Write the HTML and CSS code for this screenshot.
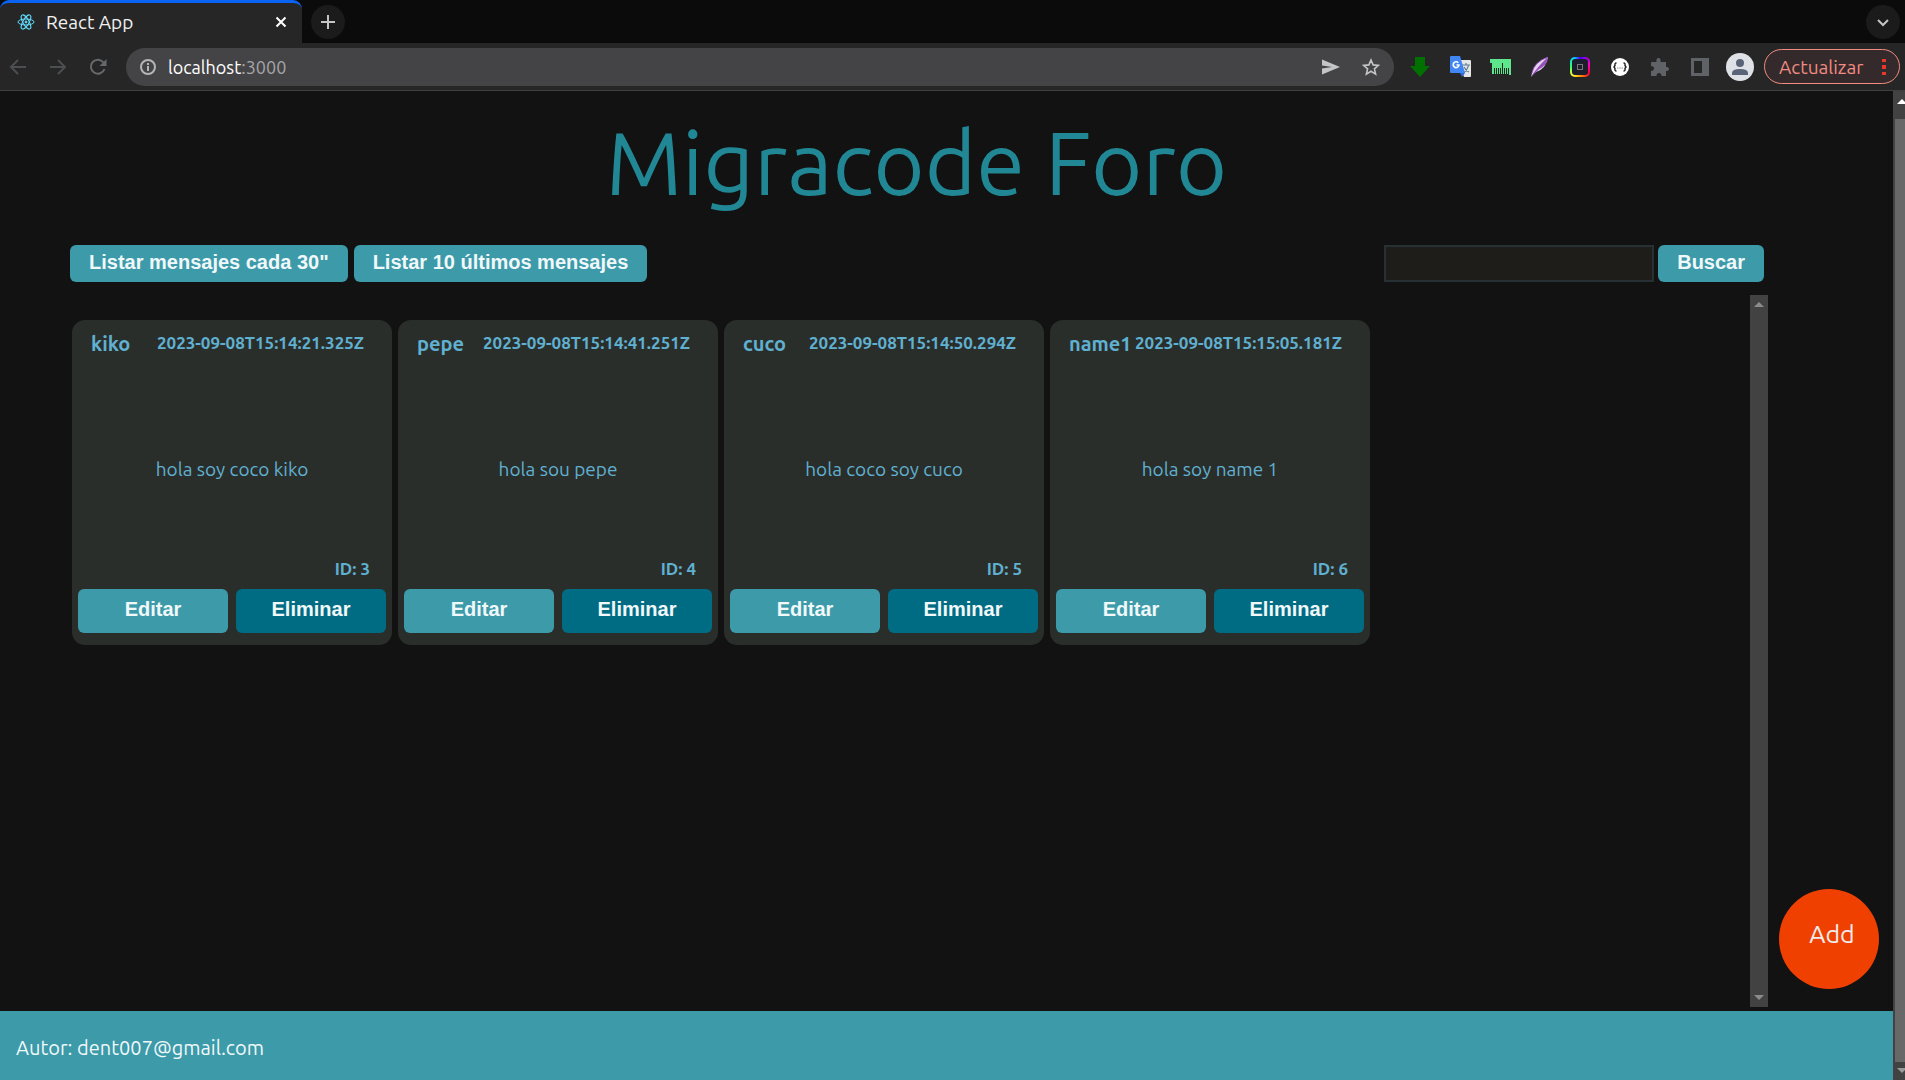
FILE: index.html
```html
<!DOCTYPE html>
<html lang="es">
<head>
<meta charset="utf-8">
<title>React App</title>
<link rel="stylesheet" href="styles.css">
</head>
<body>
<header class="browser">
  <div class="tabs">
    <div class="tab">
      <svg class="favicon" width="18" height="18" viewBox="0 0 18 18" fill="none" stroke="#61dafb" stroke-width="1"><ellipse cx="9" cy="9" rx="8" ry="3"/><ellipse cx="9" cy="9" rx="8" ry="3" transform="rotate(60 9 9)"/><ellipse cx="9" cy="9" rx="8" ry="3" transform="rotate(120 9 9)"/><circle cx="9" cy="9" r="1" fill="#61dafb"/></svg>
      <span class="tab-title">React App</span>
      <button class="plain" aria-label="Cerrar"><svg width="12" height="12" viewBox="0 0 12 12" stroke="#fff" stroke-width="2"><path d="M1.500 1.500l9 9M10.500 1.500l-9 9"/></svg></button>
    </div>
    <button class="round" aria-label="Nueva pestaña"><svg width="16" height="16" viewBox="0 0 16 16" stroke="#c4c4c4" stroke-width="2"><path d="M8 1v14M1 8h14"/></svg></button>
    <button class="round tab-search" aria-label="Buscar pestañas"><svg width="14" height="14" viewBox="0 0 14 14" fill="none" stroke="#c4c4c4" stroke-width="2"><path d="M2 5l5 5 5-5"/></svg></button>
  </div>
  <div class="toolbar">
    <nav class="history">
      <button class="plain" aria-label="Atrás"><svg width="18" height="18" viewBox="0 0 18 18" fill="none" stroke="#4c4e51" stroke-width="2"><path d="M17 9H2M9 2L2 9l7 7"/></svg></button>
      <button class="plain" aria-label="Adelante"><svg width="18" height="18" viewBox="0 0 18 18" fill="none" stroke="#4c4e51" stroke-width="2"><path d="M1 9h15M9 2l7 7-7 7"/></svg></button>
      <button class="plain" aria-label="Recargar"><svg width="18" height="18" viewBox="0 0 18 18" fill="none" stroke="#66686b" stroke-width="2"><path d="M15.500 11A7 7 0 1 1 14.500 4.500"/><path d="M17.500 1v7h-7z" fill="#66686b" stroke="none"/></svg></button>
    </nav>
    <div class="address">
      <svg width="16" height="16" viewBox="0 0 16 16" fill="none" stroke="#b4b5b7" stroke-width="2"><circle cx="8" cy="8" r="7"/><path d="M8 7v5M8 4v2"/></svg>
      <span class="url"><b>localhost</b>:3000</span>
      <svg width="18" height="18" viewBox="0 0 18 18" fill="#c4c5c7"><path d="M0 1.500L18 9 0 16.500V10.500L10 9 0 7.500z"/></svg>
      <svg class="star" width="18" height="18" viewBox="0 0 18 18" fill="none" stroke="#c4c5c7" stroke-width="1.600"><path d="M9 2l2.100 4.900 5.300.5-4 3.500 1.200 5.200L9 13.300l-4.600 2.800 1.200-5.200-4-3.500 5.300-.5z"/></svg>
    </div>
    <div class="extensions">
      <svg width="20" height="20" viewBox="0 0 20 20"><path d="M5 0h10v9h5L10 20 0 9h5z" fill="#007000"/></svg>
      <svg width="21" height="21" viewBox="0 0 21 21"><path d="M8 4h12q1 0 1 1v15q0 1-1 1h-6z" fill="#e4e6e8"/><path d="M12 9h8M16 7v2M18.500 9q-1 5-5 8M14 11q2 4 5 5" stroke="#607d8b" stroke-width="1.200" fill="none"/><path d="M1 0h9l5 17H1q-1 0-1-1V1q0-1 1-1z" fill="#4285f4"/><path d="M10 17h5l-3 4z" fill="#3367d6"/><path d="M8.300 6.800A2.900 2.900 0 1 0 9 9H6.500" fill="none" stroke="#fff" stroke-width="1.600"/></svg>
      <svg width="21" height="16" viewBox="0 0 21 16"><path fill="#5ee68d" d="M0 0h21v16h-2V9h-1v6h-1V9h-1v6h-1V9h-1v6h-1V4h-1v11h-1V9h-1v6H9V9H8v6H7V9H6v6H5V9H4v6H2V4H0z"/></svg>
      <svg width="18" height="20" viewBox="0 0 18 20"><path d="M17 0Q3 5 1 16L0 20Q2 16 5 15 15 12 17 0z" fill="#e3d3f0"/><path d="M0 20Q6 10 17 0 17 8 7 13z" fill="#9650b8"/><path d="M17 0Q3 5 1 16" fill="none" stroke="#9650b8"/></svg>
      <span class="rainbow"><i></i></span>
      <svg width="20" height="20" viewBox="0 0 20 20"><circle cx="10" cy="10" r="9" fill="#fff"/><path d="M6.500 6q-2 0-1.500 2.500L4 10l1 1.500Q4.500 14 6.500 14M13.500 6q2 0 1.500 2.500l1 1.500-1 1.500q.5 2.500-1.500 2.500" fill="none" stroke="#222" stroke-width="1.400"/><path d="M7.200 11h1.200M9.400 11h1.200M11.600 11h1.200" stroke="#777"/></svg>
      <svg width="18" height="18" viewBox="0 0 18 18" fill="#5f6368"><path d="M1 4h4.500Q5 0 7.500 0T9.500 4H15v5q3-.5 3 2t-3 2v5h-4.500q0-3-2.500-3t-2.500 3H0v-5q3-.3 3-2.500T0 8V5q0-1 1-1z"/></svg>
      <svg width="18" height="18" viewBox="0 0 18 18"><path d="M0 0h18v18H0zM3 3v12h8V3z" fill="#5f6368" fill-rule="evenodd"/></svg>
    </div>
    <svg class="avatar" width="28" height="28" viewBox="0 0 28 28"><circle cx="14" cy="14" r="14" fill="#dee1e6"/><circle cx="14" cy="10" r="4" fill="#5a6478"/><path d="M6 22v-2q0-4 8-4t8 4v2z" fill="#5a6478"/></svg>
    <button class="update">Actualizar <svg width="4" height="16" viewBox="0 0 4 16" fill="#e8382e"><path d="M0 0h4v3H0zM0 6h4v4H0zM0 13h4v3H0z"/></svg></button>
  </div>
</header>
<div class="viewport">
  <div class="page">
    <h1 class="title">Migracode Foro</h1>
    <main class="forum">
      <div class="actions">
        <button class="btn">Listar mensajes cada 30"</button>
        <button class="btn">Listar 10 últimos mensajes</button>
        <form class="search">
          <input class="search-input" type="text" aria-label="Buscar mensajes">
          <button class="btn" type="button">Buscar</button>
        </form>
      </div>
      <div class="board">
        <div class="cards">
          <article class="card">
            <div class="card-head"><h2>kiko</h2><time>2023-09-08T15:14:21.325Z</time></div>
            <p class="message">hola soy coco kiko</p>
            <p class="id">ID: 3</p>
            <div class="card-actions"><button class="btn">Editar</button><button class="btn dark">Eliminar</button></div>
          </article>
          <article class="card">
            <div class="card-head"><h2>pepe</h2><time>2023-09-08T15:14:41.251Z</time></div>
            <p class="message">hola sou pepe</p>
            <p class="id">ID: 4</p>
            <div class="card-actions"><button class="btn">Editar</button><button class="btn dark">Eliminar</button></div>
          </article>
          <article class="card">
            <div class="card-head"><h2>cuco</h2><time>2023-09-08T15:14:50.294Z</time></div>
            <p class="message">hola coco soy cuco</p>
            <p class="id">ID: 5</p>
            <div class="card-actions"><button class="btn">Editar</button><button class="btn dark">Eliminar</button></div>
          </article>
          <article class="card">
            <div class="card-head"><h2>name1</h2><time>2023-09-08T15:15:05.181Z</time></div>
            <p class="message">hola soy name 1</p>
            <p class="id">ID: 6</p>
            <div class="card-actions"><button class="btn">Editar</button><button class="btn dark">Eliminar</button></div>
          </article>
        </div>
        <div class="board-scroll">
          <svg width="10" height="5" viewBox="0 0 10 5" fill="#8b8b8b"><path d="M5 0l5 5H0z"/></svg>
          <svg width="10" height="5" viewBox="0 0 10 5" fill="#8b8b8b"><path d="M0 0h10L5 5z"/></svg>
        </div>
      </div>
    </main>
    <footer class="footer">Autor: dent007@gmail.com</footer>
  </div>
  <div class="page-scroll">
    <svg width="8" height="5" viewBox="0 0 8 5" fill="#fff"><path d="M5 0l3 3v2H0z"/></svg>
    <div class="thumb"></div>
    <svg width="8" height="5" viewBox="0 0 8 5" fill="#9a9a9a"><path d="M0 0h8v2L5 5z"/></svg>
  </div>
  <button class="add">Add</button>
</div>
</body>
</html>
```
FILE: styles.css
```css
* { box-sizing: border-box; }
body {
  margin: 0;
  min-height: 100vh;
  display: flex;
  flex-direction: column;
  background: #121212;
  font-family: Ubuntu, "Noto Sans", sans-serif;
}
button { border: 0; padding: 0; font: inherit; color: inherit; cursor: pointer; }
svg { display: block; flex: none; }
h1, h2, p { margin: 0; font-weight: 400; }

/* Browser frame */
.browser { background: #262626; border-bottom: 1px solid #3f3f41; }
.tabs { display: flex; align-items: center; height: 43px; background: #0b0b0b; }
.tab {
  display: flex;
  align-items: center;
  align-self: stretch;
  width: 302px;
  padding: 0 15px 2px 17px;
  background: #262626;
  border-top: 3px solid #0b63f3;
  border-radius: 9px 9px 0 0;
  color: #f1f1f1;
  font-size: 19px;
  line-height: 22px;
}
.tab-title { flex: 1; margin-left: 11px; }
.plain { background: none; }
.round {
  display: grid;
  place-items: center;
  width: 34px;
  height: 34px;
  margin-left: 9px;
  border-radius: 50%;
  background: #1b1b1b;
}
.tab-search { margin: 0 5px 0 auto; }
.toolbar { display: flex; align-items: center; height: 47px; padding-right: 5px; }
.history { display: flex; gap: 22px; width: 126px; padding-left: 9px; }
.address {
  display: flex;
  align-items: center;
  flex: 1;
  height: 38px;
  padding: 0 14px;
  border-radius: 19px;
  background: #444446;
  color: #a5a6a8;
  font-size: 18px;
}
.url { flex: 1; margin-left: 12px; }
.url b { color: #fff; font-weight: 400; }
.star { margin-left: 22px; }
.extensions {
  display: grid;
  grid-template-columns: repeat(8, 40px);
  place-items: center;
  margin: 0 6px;
}
.rainbow {
  display: grid;
  place-items: center;
  width: 20px;
  height: 20px;
  border-radius: 5px;
  background: conic-gradient(#40f, #f0c 20%, #f03 35%, #f80 48%, #ff3 62%, #3f6 75%, #0df 90%, #40f);
}
.rainbow i {
  width: 16px;
  height: 16px;
  border-radius: 3px;
  background: #1d1d2b;
  outline: 1px solid #777;
  outline-offset: -6px;
}
.avatar { margin-right: 10px; }
.update {
  display: flex;
  align-items: center;
  justify-content: space-between;
  width: 136px;
  height: 35px;
  padding: 0 13px 0 14px;
  border: 1px solid #f28b82;
  border-radius: 18px;
  background: #342a2b;
  color: #f28b82;
  font-size: 19px;
}

/* Page */
.viewport { position: relative; flex: 1; display: flex; }
.page { flex: 1; display: flex; flex-direction: column; }
.title {
  padding: 12px 60px 0 0;
  text-align: center;
  color: #218794;
  font-size: 88px;
  line-height: 120px;
}
.forum { flex: 1; display: flex; flex-direction: column; margin: 22px 125px 4px 70px; }
.actions { display: flex; gap: 6px; padding-right: 4px; }
.btn {
  height: 37px;
  padding: 0 19px 2px;
  border-radius: 6px;
  background: #3c9aa9;
  color: #f0f8fa;
  font: bold 20px "Liberation Sans", sans-serif;
}
.search { display: flex; gap: 4px; margin-left: auto; }
.search-input {
  width: 270px;
  padding: 0 8px;
  border: 2px solid #273032;
  background: #1f1d1a;
  color: #f0f8fa;
  font-size: 18px;
}
.board { flex: 1; display: flex; margin-top: 13px; }
.cards { flex: 1; display: flex; flex-wrap: wrap; align-content: flex-start; gap: 6px; padding: 25px 0 0 2px; }
.card {
  display: flex;
  flex-direction: column;
  width: 320px;
  height: 325px;
  padding: 12px 6px;
  border-radius: 13px;
  background: #2a2e2b;
  color: #60b0d0;
}
.card-head { display: flex; justify-content: space-between; padding: 0 22px 0 13px; line-height: 24px; }
.card-head h2 { font-size: 20px; font-weight: 700; }
.card-head time { font-size: 17px; font-weight: 700; line-height: 22px; }
.message { flex: 1; display: grid; place-items: center; padding-top: 24px; font-size: 19px; }
.id { padding: 0 16px 8px; text-align: right; font-size: 17px; font-weight: 700; line-height: 24px; }
.card-actions { display: grid; grid-template-columns: 1fr 1fr; gap: 8px; }
.card-actions .btn { height: 44px; padding-bottom: 4px; }
.btn.dark { background: #006c83; }
.board-scroll {
  display: flex;
  flex-direction: column;
  justify-content: space-between;
  align-items: center;
  width: 18px;
  padding: 7px 0;
  background: #424242;
}
.page-scroll {
  display: flex;
  flex-direction: column;
  align-items: flex-end;
  gap: 15px;
  width: 12px;
  padding: 8px 0 7px 2px;
  background: #424242;
}
.thumb { flex: 1; width: 100%; background: #686868; }
.page-scroll .thumb + svg { margin-top: -9px; }
.footer { padding: 24px 16px 20px; background: #3c9aa9; color: #f0f8fa; font-size: 20px; line-height: 25px; }
.add {
  position: absolute;
  right: 26px;
  bottom: 91px;
  width: 100px;
  height: 100px;
  padding: 0 0 10px 6px;
  border-radius: 50%;
  background: #f04000;
  color: #ececec;
  font-size: 25px;
}
```
